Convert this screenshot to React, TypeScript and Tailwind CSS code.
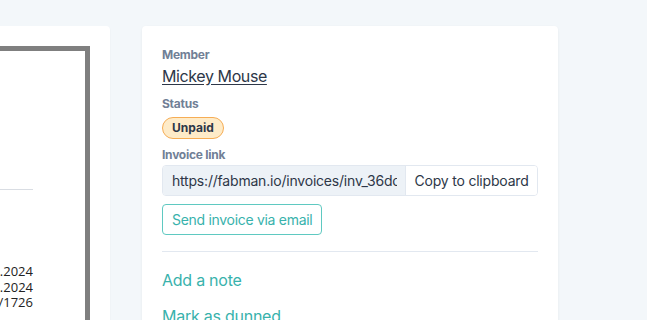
import React from 'react';

const App: React.FC = () => {
  return (
    <div className="min-h-screen h-[320px] overflow-hidden bg-[#f3f7fa] pt-[26px] font-['Inter',sans-serif]">
      <div className="flex gap-[32px]">
        {/* Invoice preview card (mostly off-screen) */}
        <div className="ml-[-190px] w-[300px] h-[400px] shrink-0 bg-white rounded shadow-[0_1px_2px_rgba(0,0,0,0.05)] pt-[20px] pr-[20px]">
          <div className="h-full border-t-[5px] border-r-[5px] border-[#7f7f7f] bg-white pr-[52px] font-['Open_Sans',sans-serif] text-[13px] text-[#222] leading-[15.5px]">
            <div className="h-[138px]" />
            <div className="border-t border-[#d9dde3] ml-[100px]" />
            <div className="h-[74px]" />
            <div className="text-right">
              <div>Date: 01.10.2024</div>
              <div>Due: 15.10.2024</div>
              <div>No.: 2024/1726</div>
            </div>
          </div>
        </div>

        {/* Details card */}
        <div className="w-[416px] shrink-0 h-[400px] bg-white rounded shadow-[0_1px_3px_rgba(0,0,0,0.06)] px-[20px] pt-[21px] tracking-[-0.25px]">
          <div className="text-[12px] leading-[16px] font-bold text-[#718096]">Member</div>
          <a href="#" className="block mt-[1px] text-[16px] leading-[24px] text-[#2d3748] underline underline-offset-[2px] tracking-[-0.4px]">
            Mickey Mouse
          </a>

          <div className="mt-[8px] text-[12px] leading-[16px] font-bold text-[#718096]">Status</div>
          <span className="inline-block mt-[5px] h-[22px] px-[9px] rounded-full border border-[#f6ad55] bg-[#feebc8] text-[12px] leading-[20px] font-bold text-[#2d3748] tracking-normal">
            Unpaid
          </span>

          <div className="mt-[8px] text-[12px] leading-[16px] font-bold text-[#718096]">Invoice link</div>
          <div className="mt-[2px] flex h-[31px] rounded border border-[#e2e8f0] overflow-hidden text-[14px] text-[#2d3748]">
            <input
              readOnly
              value="https://fabman.io/invoices/inv_36dc8f1a2b"
              className="w-[242px] bg-[#edf2f7] pl-[9px] pr-[8px] outline-none text-[#2d3748] tracking-[-0.2px]"
            />
            <button className="flex-1 border-l border-[#e2e8f0] bg-white leading-[29px] text-center tracking-[-0.2px]">
              Copy to clipboard
            </button>
          </div>

          <button className="block mt-[8px] h-[31px] px-[9px] rounded border border-[#5fc9c1] text-[14px] text-[#38b2ac] bg-white tracking-[-0.3px]">
            Send invoice via email
          </button>

          <div className="mt-[16px] border-t border-[#e2e8f0]" />

          <a href="#" className="block mt-[16px] text-[16px] leading-[24px] text-[#38b2ac]">Add a note</a>
          <a href="#" className="block mt-[12px] text-[16px] leading-[24px] text-[#38b2ac]">Mark as dunned</a>
        </div>
      </div>
    </div>
  );
};

export default App;
